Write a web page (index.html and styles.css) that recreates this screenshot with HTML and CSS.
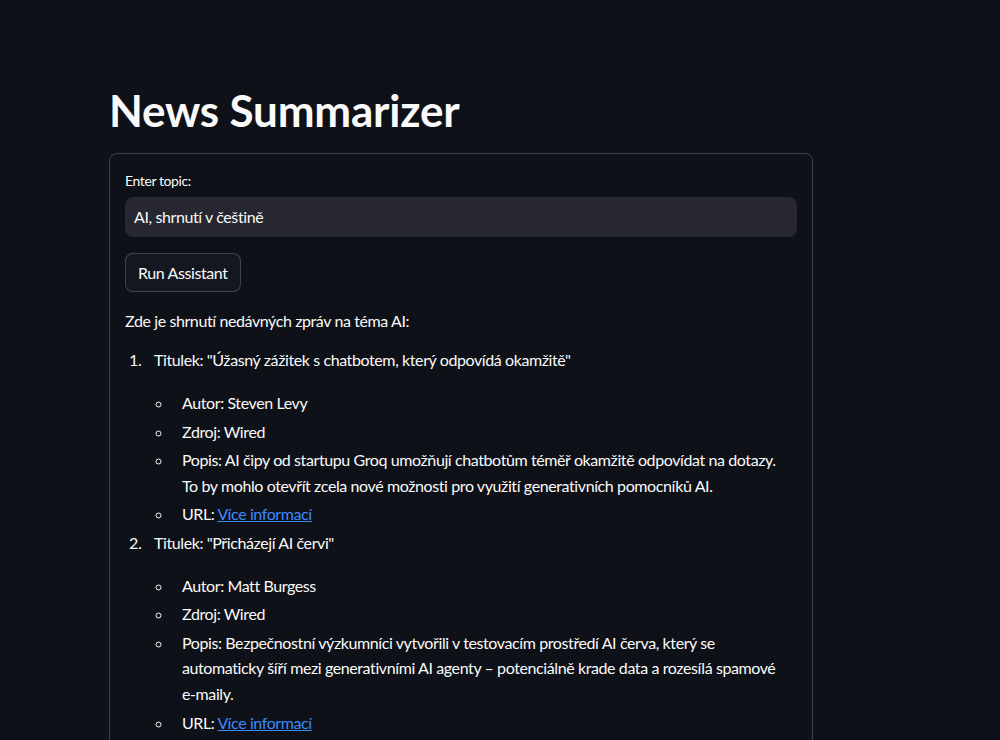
FILE: index.html
```html
<!DOCTYPE html>
<html lang="cs">
<head>
    <meta charset="UTF-8">
    <meta name="viewport" content="width=device-width, initial-scale=1.0">
    <title>News Summarizer</title>
    <link rel="stylesheet" href="styles.css">
</head>
<body>

    <div class="main">
        <h1>News Summarizer</h1>

        <!-- Form with topic input -->
        <div class="form-box">
            <label class="field-label" for="topic">Enter topic:</label>
            <input type="text" id="topic" class="text-input" value="AI, shrnutí v češtině">

            <button class="btn">Run Assistant</button>

            <div class="result">
                <p class="intro">Zde je shrnutí nedávných zpráv na téma AI:</p>
                <ol class="news-list">
                    <li>
                        <p class="item-title">Titulek: "Úžasný zážitek s chatbotem, který odpovídá okamžitě"</p>
                        <ul class="details">
                            <li>Autor: Steven Levy</li>
                            <li>Zdroj: Wired</li>
                            <li>Popis: AI čipy od startupu Groq umožňují chatbotům téměř okamžitě odpovídat na dotazy. To by mohlo otevřít zcela nové možnosti pro využití generativních pomocníků AI.</li>
                            <li>URL: <a href="#">Více informací</a></li>
                        </ul>
                    </li>
                    <li>
                        <p class="item-title">Titulek: "Přicházejí AI červi"</p>
                        <ul class="details">
                            <li>Autor: Matt Burgess</li>
                            <li>Zdroj: Wired</li>
                            <li>Popis: Bezpečnostní výzkumníci vytvořili v testovacím prostředí AI červa, který se automaticky šíří mezi generativními AI agenty – potenciálně krade data a rozesílá spamové e&#8209;maily.</li>
                            <li>URL: <a href="#">Více informací</a></li>
                        </ul>
                    </li>
                </ol>
            </div>
        </div>
    </div>

</body>
</html>
```

FILE: styles.css
```css
/* Base */
body, h1, p, ol, ul {
    margin: 0;
    padding: 0;
}

body {
    background-color: #0e1117;
    color: #fafafa;
    font-family: 'Lato', 'Noto Sans', sans-serif;
    font-size: 16px;
    line-height: 1.6;
    letter-spacing: -0.4px;
    overflow: hidden;
}

/* Main column */
.main {
    width: 704px;
    margin-left: 109px;
    padding-top: 84px;
}

h1 {
    font-size: 44px;
    font-weight: 700;
    line-height: 1.2;
    letter-spacing: -0.2px;
    margin-bottom: 16px;
}

/* Form box */
.form-box {
    border: 1px solid rgba(250, 250, 250, 0.2);
    border-radius: 8px;
    padding: 16px 15px 40px;
}

.field-label {
    display: block;
    font-size: 14px;
    line-height: 22px;
    margin-bottom: 5px;
}

.text-input {
    display: block;
    width: 100%;
    box-sizing: border-box;
    height: 40px;
    padding: 0 9px;
    border: none;
    border-radius: 8px;
    background-color: #262730;
    color: #fafafa;
    font-family: inherit;
    font-size: 16px;
    letter-spacing: -0.4px;
    outline: none;
}

.btn {
    display: block;
    margin-top: 16px;
    height: 39px;
    padding: 0 12px;
    border: 1px solid rgba(250, 250, 250, 0.2);
    border-radius: 8px;
    background-color: #131720;
    color: #fafafa;
    font-family: inherit;
    font-size: 16px;
    letter-spacing: -0.4px;
}

/* Result text */
.result {
    margin-top: 16px;
}

.intro {
    margin-bottom: 14px;
}

.news-list {
    padding-left: 20px;
}

.news-list li {
    padding-left: 9px;
    margin-top: 3px;
}

.item-title {
    margin-bottom: 17px;
}

.details {
    list-style: circle;
    padding-left: 19px;
    padding-right: 10px;
}

.details li {
    margin-top: 3px;
}

.details a {
    color: #3d8bfd;
}
```
